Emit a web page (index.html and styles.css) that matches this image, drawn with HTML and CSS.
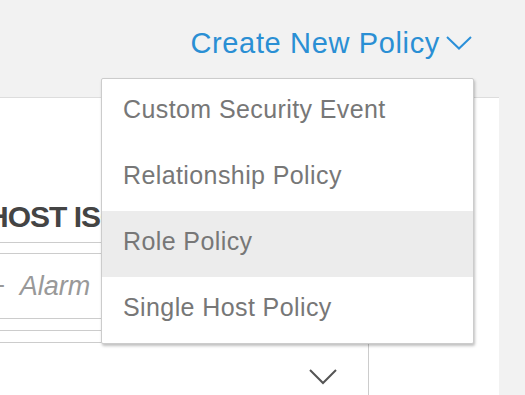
FILE: index.html
```html
<!DOCTYPE html>
<html lang="en">
<head>
  <meta charset="UTF-8">
  <title>Policies</title>
  <link rel="stylesheet" href="styles.css">
</head>
<body>
  <div class="topbar">
    <a class="create-link" href="#">
      Create New Policy
      <svg class="chev-blue" width="26" height="14" viewBox="0 0 26 14"><polyline points="1,1 13,12.5 25,1" fill="none" stroke="#2b90d9" stroke-width="2"/></svg>
    </a>
  </div>

  <div class="panel">
    <div class="left-col">
      <div class="heading">HOST ISOLATION</div>
      <div class="alarm-box"><span class="plus">+</span>Alarm</div>
      <div class="rule"></div>
      <div class="rule"></div>
      <div class="select-row">
        <svg width="28" height="16" viewBox="0 0 28 16"><polyline points="1,1 14,14 27,1" fill="none" stroke="#555" stroke-width="2"/></svg>
      </div>
    </div>
    <div class="right-col"></div>
  </div>

  <!-- dropdown opened from Create New Policy -->
  <ul class="policy-menu">
    <li>Custom Security Event</li>
    <li>Relationship Policy</li>
    <li class="active">Role Policy</li>
    <li>Single Host Policy</li>
  </ul>
</body>
</html>
```

FILE: styles.css
```css
body {
  margin: 0;
  background-color: #f2f2f2;
  font-family: 'Liberation Sans', Arial, sans-serif;
  width: 525px;
  height: 395px;
  overflow: hidden;
  position: relative;
}

.topbar {
  height: 97px;
  box-sizing: border-box;
  display: flex;
  justify-content: flex-end;
  padding: 26px 53px 0 0;
}

.create-link {
  display: flex;
  align-items: center;
  gap: 6px;
  height: 34px;
  color: #2a8fd4;
  font-size: 29px;
  letter-spacing: 0.65px;
  text-decoration: none;
}

.panel {
  display: flex;
  background-color: #fff;
  border-top: 1px solid #ddd;
  margin-right: 26px;
  height: 298px;
}

.left-col {
  width: 368px;
  border-right: 1px solid #ccc;
  overflow: hidden;
}

.heading {
  margin-left: -13px;
  padding-top: 102px;
  height: 42px;
  font-size: 30px;
  font-weight: bold;
  letter-spacing: -1px;
  color: #444;
  border-bottom: 1px solid #ccc;
  white-space: nowrap;
}

.alarm-box {
  margin-top: 10px;
  height: 64px;
  line-height: 64px;
  border-top: 1px solid #ccc;
  border-bottom: 1px solid #ccc;
  margin-left: -11px;
  font-size: 27px;
  font-style: italic;
  color: #999;
}

.plus {
  margin-right: 15px;
}

.rule {
  margin-top: 11px;
  border-top: 1px solid #ccc;
}

.select-row {
  display: flex;
  justify-content: flex-end;
  padding: 26px 31px 0 0;
}

.right-col {
  flex: 1;
}

.policy-menu {
  list-style: none;
  margin: 0;
  padding: 0;
  position: absolute;
  left: 101px;
  top: 78px;
  width: 371px;
  background-color: #fff;
  border: 1px solid #ccc;
  border-radius: 2px;
  box-shadow: 1px 2px 3px rgba(0, 0, 0, 0.25);
}

.policy-menu li {
  height: 66px;
  box-sizing: border-box;
  display: flex;
  align-items: center;
  padding: 0 0 5px 21px;
  font-size: 25px;
  letter-spacing: 0.4px;
  color: #777;
}

.policy-menu li.active {
  background-color: #ececec;
}
```
